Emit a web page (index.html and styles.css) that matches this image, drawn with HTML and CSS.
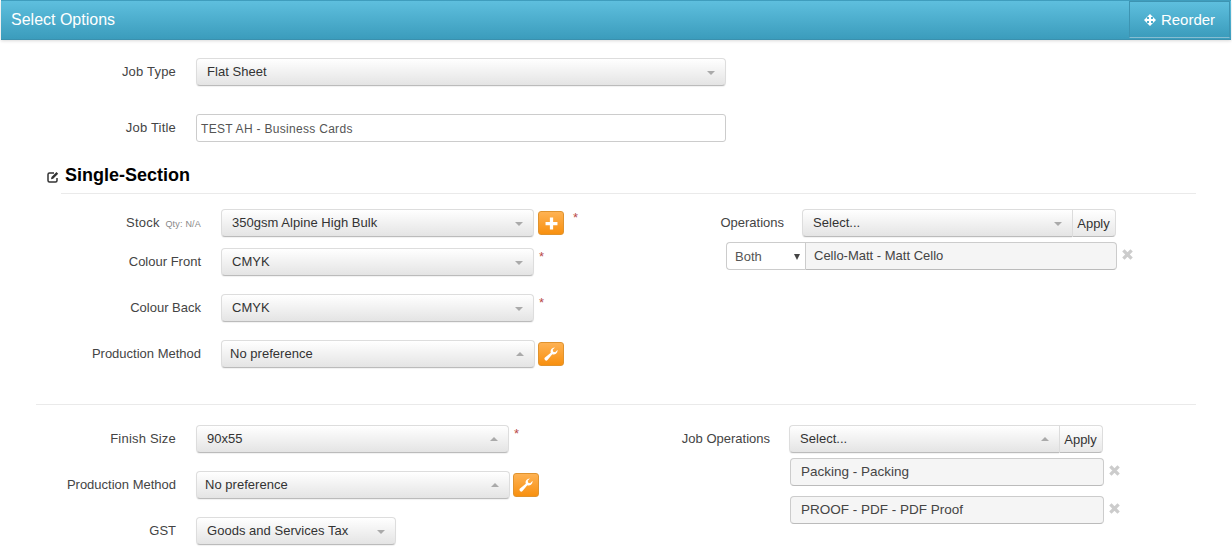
FILE: index.html
```html
<!DOCTYPE html>
<html lang="en">
<head>
<meta charset="utf-8">
<title>Select Options</title>
<link rel="stylesheet" href="styles.css">
</head>
<body>
<div class="panel">
  <header class="panel-head">
    <h1 class="panel-title">Select Options</h1>
    <button class="reorder">
      <svg class="ico-move" viewBox="0 0 12 12"><path fill="#fff" d="M6 0l3 3H7v2h2V3l3 3-3 3V7H7v2h2l-3 3-3-3h2V7H3v2L0 6l3-3v2h2V3H3z"/></svg>
      Reorder
    </button>
  </header>

  <div class="job">
    <div class="field">
      <label class="lbl lbl-job wide">Job Type</label>
      <div class="sel w530"><span>Flat Sheet</span><i class="caret"></i></div>
    </div>
    <div class="field gap-28">
      <label class="lbl lbl-job wide">Job Title</label>
      <div class="input w530">TEST AH - Business Cards</div>
    </div>
  </div>

  <h2 class="sec-title">
    <svg class="ico-edit" viewBox="0 0 12 12"><path fill="none" stroke="#333" stroke-width="1.500" d="M10 7v2.500A1.500 1.500 0 0 1 8.500 11h-6A1.500 1.500 0 0 1 1 9.500v-6A1.500 1.500 0 0 1 2.500 2H7"/><path fill="#333" d="M4.500 6l5-5 1.700 1.700-5 5-2.200.5z"/></svg>
    Single-Section
  </h2>
  <div class="rule rule-sec"></div>

  <div class="cols cols-one">
    <div class="col-left-one">
      <div class="field">
        <label class="lbl lbl-sec wide">Stock <small class="qty">Qty: N/A</small></label>
        <div class="sel w313"><span>350gsm Alpine High Bulk</span><i class="caret"></i></div>
        <button class="btn-o btn-first"><svg class="ico-btn" viewBox="0 0 12 12"><path fill="#fff" d="M4.500 0.500h3v4h4v3h-4v4h-3v-4h-4v-3h4z"/></svg></button>
        <span class="req req-stock">*</span>
      </div>
      <div class="field gap-11">
        <label class="lbl lbl-sec">Colour Front</label>
        <div class="sel w313"><span>CMYK</span><i class="caret"></i></div>
        <span class="req">*</span>
      </div>
      <div class="field gap-18">
        <label class="lbl lbl-sec">Colour Back</label>
        <div class="sel w313"><span>CMYK</span><i class="caret"></i></div>
        <span class="req">*</span>
      </div>
      <div class="field gap-18">
        <label class="lbl lbl-sec">Production Method</label>
        <div class="sel w314"><span class="tight">No preference</span><i class="caret up"></i></div>
        <button class="btn-o btn-near"><svg class="ico-wrench" viewBox="0 0 14 14"><path fill="#fff" d="M13.600 3.300a4 4 0 0 1-5.300 3.900L3.500 13a1.700 1.700 0 0 1-2.500-2.400L6.800 5.700A4 4 0 0 1 10.900.4L8.700 2.700l.5 2 2 .5 2.200-2.300z"/></svg></button>
      </div>
    </div>
    <div class="col-right-one">
      <div class="field">
        <label class="lbl lbl-ops">Operations</label>
        <div class="sel w270 joined"><span>Select...</span><i class="caret"></i></div>
        <button class="apply">Apply</button>
      </div>
      <div class="op-row">
        <div class="both">Both<i class="caret-dark"></i></div>
        <div class="op-text op-text-joined">Cello-Matt - Matt Cello</div>
        <svg class="ico-x" viewBox="0 0 12 12"><path stroke="#ccc" stroke-width="3.600" d="M1.500 1.500l9 9M10.500 1.500l-9 9"/></svg>
      </div>
    </div>
  </div>

  <div class="rule rule-full"></div>

  <div class="cols cols-two">
    <div class="col-left-two">
      <div class="field">
        <label class="lbl lbl-job wide">Finish Size</label>
        <div class="sel w313"><span>90x55</span><i class="caret up"></i></div>
        <span class="req">*</span>
      </div>
      <div class="field gap-18">
        <label class="lbl lbl-job">Production Method</label>
        <div class="sel w314"><span class="tight">No preference</span><i class="caret up"></i></div>
        <button class="btn-o btn-near"><svg class="ico-wrench" viewBox="0 0 14 14"><path fill="#fff" d="M13.600 3.300a4 4 0 0 1-5.300 3.900L3.500 13a1.700 1.700 0 0 1-2.500-2.400L6.800 5.700A4 4 0 0 1 10.900.4L8.700 2.700l.5 2 2 .5 2.200-2.300z"/></svg></button>
      </div>
      <div class="field gap-18">
        <label class="lbl lbl-job">GST</label>
        <div class="sel w200"><span>Goods and Services Tax</span><i class="caret"></i></div>
      </div>
    </div>
    <div class="col-right-two">
      <div class="field">
        <label class="lbl lbl-jobops">Job Operations</label>
        <div class="sel w270 joined"><span>Select...</span><i class="caret up"></i></div>
        <button class="apply">Apply</button>
      </div>
      <div class="op-row op-row-packing">
        <div class="op-text w314">Packing - Packing</div>
        <svg class="ico-x" viewBox="0 0 12 12"><path stroke="#ccc" stroke-width="3.600" d="M1.500 1.500l9 9M10.500 1.500l-9 9"/></svg>
      </div>
      <div class="op-row op-row-proof">
        <div class="op-text w314">PROOF - PDF - PDF Proof</div>
        <svg class="ico-x" viewBox="0 0 12 12"><path stroke="#ccc" stroke-width="3.600" d="M1.500 1.500l9 9M10.500 1.500l-9 9"/></svg>
      </div>
    </div>
  </div>
</div>
</body>
</html>
```
FILE: styles.css
```css
* { box-sizing: border-box; }
html, body { margin: 0; height: 549px; overflow: hidden; background: #fff; }
body { font-family: "Liberation Sans", Arial, sans-serif; font-size: 13px; color: #333; }
.panel { margin: 0 1px; height: 549px; position: relative; }
.panel-head {
  height: 40px; display: flex; justify-content: space-between; align-items: flex-start;
  background: linear-gradient(#5ebfde, #3b9cbc);
  border-top: 1px solid #3f9dbd; border-bottom: 1px solid #3a90ae;
  box-shadow: 0 1px 3px rgba(0,0,0,.15);
}
.panel-title { margin: 0; padding-left: 10px; font-size: 16px; font-weight: 400; line-height: 38px; color: #fff; }
.reorder {
  width: 101px; height: 37px; margin: 0 1px 0 0; padding: 0; display: flex; align-items: center; justify-content: center; gap: 5px;
  font: 15px "Liberation Sans", Arial, sans-serif; color: #fff;
  background: linear-gradient(#5ebfde, #3b9cbc);
  border: 1px solid #3d94b2; border-bottom: 1px solid #86bdd1; border-radius: 0;
}
.ico-move { width: 12px; height: 12px; }

.job { padding-top: 18px; }
.field { display: flex; align-items: flex-start; }
.gap-11 { margin-top: 11px; }
.gap-18 { margin-top: 18px; }
.gap-28 { margin-top: 28px; }
.lbl { flex: none; height: 28px; text-align: right; line-height: 28px; color: #444; }
.wide { letter-spacing: .2px; }
.lbl-job { width: 175px; margin-right: 20px; }
.lbl-sec { width: 200px; margin-right: 20px; }
.lbl-ops { width: 183px; margin-right: 18px; }
.lbl-jobops { width: 170px; margin-right: 19px; }
.qty { font-size: 9px; color: #888; margin-left: 2px; letter-spacing: .2px; }

.sel {
  flex: none; height: 28px; position: relative; padding-left: 10px; line-height: 26px; color: #333; letter-spacing: .03px;
  background: linear-gradient(#fff, #e4e4e4);
  border: 1px solid #ddd; border-bottom-color: #bbb; border-radius: 4px;
  box-shadow: 0 1px 1px rgba(0,0,0,.06);
}
.sel .tight { margin-left: -2px; }
.w530 { width: 530px; }
.w313 { width: 313px; }
.w314 { width: 314px; }
.w270 { width: 270px; }
.w200 { width: 200px; }
.joined { border-radius: 4px 0 0 4px; border-right: 0; }
.caret {
  position: absolute; right: 10px; top: 12px; width: 0; height: 0;
  border-left: 4.500px solid transparent; border-right: 4.500px solid transparent; border-top: 4.500px solid #aaa;
}
.caret.up { border-top: 0; border-bottom: 4.500px solid #aaa; top: 11px; }
.apply {
  flex: none; width: 44px; height: 28px; padding: 0 1px 0 0; font: 13px "Liberation Sans", Arial, sans-serif; color: #333;
  background: linear-gradient(#fff, #e8e8e8);
  border: 1px solid #ddd; border-bottom-color: #bbb; border-radius: 0 4px 4px 0;
}
.input {
  flex: none; height: 28px; padding-left: 4px; line-height: 28px; font-size: 12px; letter-spacing: .3px; color: #555;
  background: #fff; border: 1px solid #ccc; border-radius: 3px;
}
.btn-o {
  flex: none; width: 26px; height: 24px; margin: 2px 0 0 4px; padding: 0; display: flex; align-items: center; justify-content: center;
  background: linear-gradient(#feb253, #f8900f);
  border: 1px solid #e0932e; border-radius: 3px;
}
.btn-near { margin-left: 3px; }
.ico-btn { width: 13px; height: 13px; }
.ico-wrench { width: 14px; height: 14px; }
.req { margin: -1px 0 0 5px; color: #b94a4a; font-size: 13px; line-height: 20px; }
.req-stock { margin-left: 9px; }

.sec-title {
  margin: 21px 0 0 46px; height: 25px; display: flex; align-items: center; gap: 6px;
  font-size: 18px; font-weight: 700; line-height: 25px; color: #000;
}
.ico-edit { width: 12px; height: 12px; margin-top: 2px; }
.rule { height: 1px; background: #eaeaea; }
.rule-sec { margin: 5px 35px 0 60px; }
.rule-full { margin: 36px 35px 0 35px; }

.cols { display: flex; align-items: flex-start; }
.cols-one { margin-top: 15px; }
.cols-two { margin-top: 20px; }
.col-left-one { flex: none; width: 600px; }
.col-right-one { flex: none; width: 600px; }
.col-left-two { flex: none; width: 599px; }
.col-right-two { flex: none; width: 600px; }

.op-row { display: flex; align-items: flex-start; }
.col-right-one .op-row { margin: 5px 0 0 125px; }
.op-row-packing { margin: 5px 0 0 190px; }
.op-row-proof { margin: 10px 0 0 190px; }
.both {
  width: 79px; height: 28px; padding-left: 8px; line-height: 28px; position: relative; background: #fff;
  border: 1px solid #ccc; border-right: 0; border-radius: 4px 0 0 4px; color: #555;
}
.caret-dark {
  position: absolute; right: 5px; top: 11px; width: 0; height: 0;
  border-left: 3.500px solid transparent; border-right: 3.500px solid transparent; border-top: 6px solid #444;
}
.op-text {
  height: 28px; padding-left: 10px; line-height: 26px; background: #f5f5f5;
  border: 1px solid #ccc; border-bottom-color: #bbb; border-radius: 4px; color: #444;
}
.op-text-joined { width: 312px; padding-left: 8px; border-radius: 0 4px 4px 0; }
.ico-x { width: 11px; height: 11px; margin: 7px 0 0 5px; }
.op-row-packing .op-text, .op-row-proof .op-text { font-size: 13.500px; }
```
